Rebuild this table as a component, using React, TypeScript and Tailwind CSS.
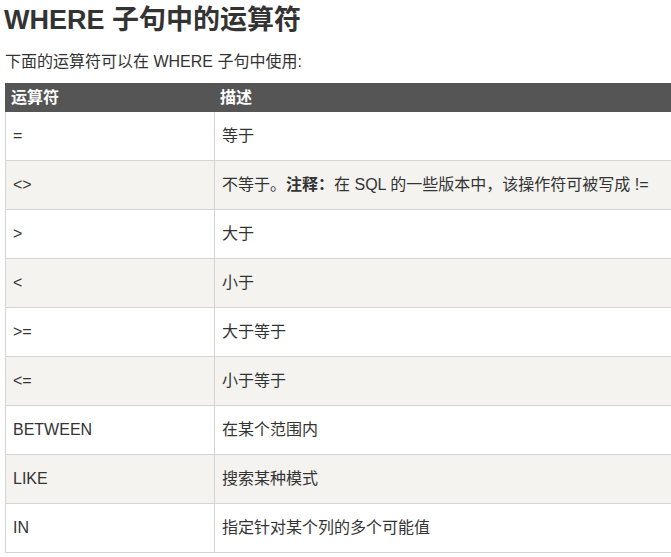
const rows: [string, React.ReactNode][] = [
  ['=', '等于'],
  [
    '<>',
    <>
      不等于。<b>注释：</b>在 SQL 的一些版本中，该操作符可被写成 !=
    </>,
  ],
  ['>', '大于'],
  ['<', '小于'],
  ['>=', '大于等于'],
  ['<=', '小于等于'],
  ['BETWEEN', '在某个范围内'],
  ['LIKE', '搜索某种模式'],
  ['IN', '指定针对某个列的多个可能值'],
];

export default function App() {
  return (
    <div
      className="w-[671px] h-[557px] overflow-hidden bg-white text-[#333] pl-[5px]"
      style={{ fontFamily: '"Liberation Sans", Arial, "Noto Sans CJK SC", sans-serif' }}
    >
      <h2 className="text-[27px] font-bold leading-[30px] pt-[5px] -ml-[1px]">WHERE 子句中的运算符</h2>
      <p className="text-[16px] leading-[22px] mt-[16px]">下面的运算符可以在 WHERE 子句中使用:</p>
      <table className="mt-[10px] w-[700px] border-collapse text-[16px]">
        <thead>
          <tr className="bg-[#555] text-white h-[28px]">
            <th className="w-[209px] text-left font-bold px-[5px] py-0 border border-[#555]">运算符</th>
            <th className="text-left font-bold px-[5px] py-0 border border-[#555]">描述</th>
          </tr>
        </thead>
        <tbody>
          {rows.map(([op, desc], i) => (
            <tr key={i} className={i % 2 === 1 ? 'bg-[#f4f3f0] h-[49px]' : 'bg-white h-[49px]'}>
              <td className="border border-[#d4d4d4] px-[7px] py-0">{op}</td>
              <td className="border border-[#d4d4d4] px-[7px] py-0">{desc}</td>
            </tr>
          ))}
        </tbody>
      </table>
    </div>
  );
}
